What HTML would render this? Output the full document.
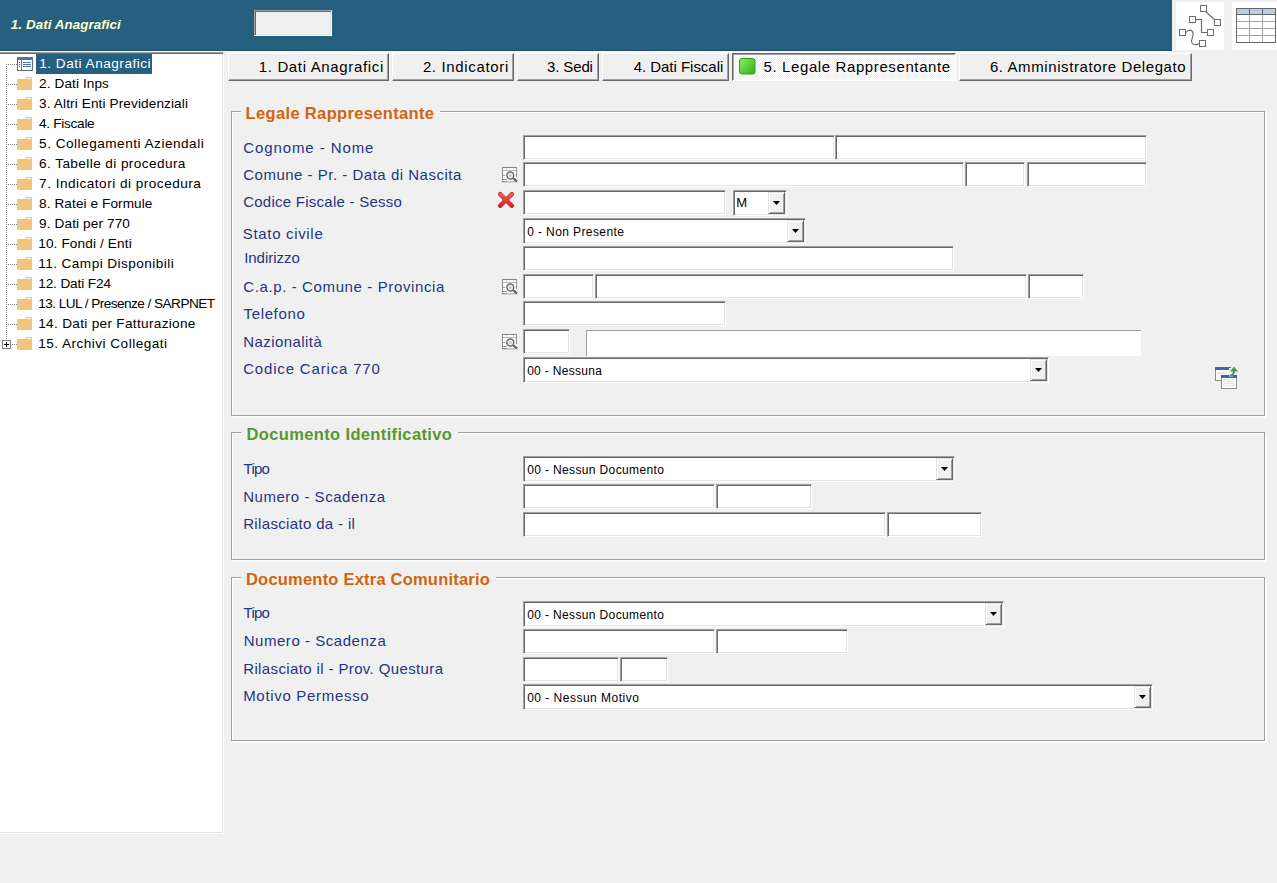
<!DOCTYPE html>
<html lang="it"><head><meta charset="utf-8"><title>Dati Anagrafici</title>
<style>
html,body{margin:0;padding:0}
body{width:1277px;height:883px;overflow:hidden;background:#f0f0f0;position:relative;font-family:'Liberation Sans', 'DejaVu Sans', sans-serif}
.b,.hdr,.sunk,.tab,.tabsel,.fs,.t,svg.i{position:absolute}
.hdr{background:#266080}
.t{white-space:pre;line-height:20px;height:20px}
.sunk{box-sizing:border-box;background:#fff;border:1px solid;border-color:#a0a0a0 #fff #fff #a0a0a0;box-shadow:inset 1px 1px 0 #696969,inset -1px -1px 0 #e3e3e3}
.tree{background:#fff}
.tab{box-sizing:border-box;background:#f0f0f0;border:1px solid;border-color:#fff #696969 #696969 #fff;box-shadow:inset -1px -1px 0 #a0a0a0}
.tabsel{box-sizing:border-box;background:repeating-conic-gradient(#fff 0 25%,#f0f0f0 0 50%) 0 0/2px 2px;border:1px solid;border-color:#696969 #fff #fff #696969;box-shadow:inset 1px 1px 0 #a0a0a0}
.fs{box-sizing:border-box;border:1px solid #a0a0a0;box-shadow:inset 1px 1px 0 #fff,1px 1px 0 #fff,2px 2px 0 #fbfbfb}
.dd{position:absolute;right:1px;top:1px;bottom:1px;width:17px;box-sizing:border-box;background:#f0f0f0;border:1px solid;border-color:#e3e3e3 #696969 #696969 #e3e3e3;box-shadow:inset 1px 1px 0 #fff,inset -1px -1px 0 #a0a0a0}
.dd svg{position:absolute;left:4px;top:8px}
</style></head>
<body>
<div class="hdr" style="left:0px;top:0px;width:1172px;height:51px;"></div>
<div class="b" style="left:0px;top:50px;width:1172px;height:1px;background:#254e69"></div>
<div class="b" style="left:0px;top:51px;width:1172px;height:1px;background:#e4f8ff"></div>
<div class="b" style="left:224px;top:52px;width:948px;height:1px;background:#f5f8fa"></div>
<div class="sunk" style="left:254px;top:10px;width:78px;height:26px;background:#f0f0f0"></div>
<svg class="i" style="left:1172px;top:0" width="105" height="52" viewBox="0 0 105 52"><rect x="4" y="2" width="48" height="48" fill="#fff"/><rect x="60" y="2" width="45" height="48" fill="#fff"/><g fill="none" stroke="#6a6a6a" stroke-width="1.15"><path d="M34 12L43 20"/><path d="M24 19.5H29.5V32.5H35"/><path d="M14 32.5C16 29.5 20 29 21 33C22 37 18 40 20 43C21.5 45 25 45 27 43.5"/></g><rect x="28.5" y="5.5" width="6" height="6" fill="#fff" stroke="#6e6e6e"/><rect x="17.5" y="16.5" width="6" height="6" fill="#fff" stroke="#6e6e6e"/><rect x="42.5" y="19.5" width="6" height="6" fill="#fff" stroke="#6e6e6e"/><rect x="7.5" y="29.5" width="6" height="6" fill="#fff" stroke="#6e6e6e"/><rect x="35.5" y="29.5" width="6" height="6" fill="#fff" stroke="#6e6e6e"/><rect x="27.5" y="40.5" width="6" height="6" fill="#fff" stroke="#6e6e6e"/><rect x="64.5" y="8.5" width="39" height="34" fill="#fff" stroke="none"/><rect x="64.5" y="8.5" width="39" height="6" fill="#b9cde5"/><g stroke="#a6a6a6" stroke-width="1" fill="none"><path d="M64 21.5H104"/><path d="M64 28.5H104"/><path d="M64 35.5H104"/><path d="M77.5 14V43"/><path d="M90.5 14V43"/></g><g stroke="#666" stroke-width="1" fill="none"><path d="M64 14.5H104"/><path d="M77.5 8V14"/><path d="M90.5 8V14"/><rect x="64.5" y="8.5" width="39" height="34"/></g></svg>
<div class="sunk tree" style="left:-2px;top:52px;width:226px;height:782px;"></div>
<div class="b" style="left:36px;top:54px;width:116px;height:20px;background:#266080"></div>
<svg class="i" style="left:0;top:54px" width="36" height="300" viewBox="0 0 36 300"><g stroke="#808080" stroke-width="1" stroke-dasharray="1 1" fill="none"><path d="M6.5 10V286"/><path d="M8 10.5H17"/><path d="M8 30.5H17"/><path d="M8 50.5H17"/><path d="M8 70.5H17"/><path d="M8 90.5H17"/><path d="M8 110.5H17"/><path d="M8 130.5H17"/><path d="M8 150.5H17"/><path d="M8 170.5H17"/><path d="M8 190.5H17"/><path d="M8 210.5H17"/><path d="M8 230.5H17"/><path d="M8 250.5H17"/><path d="M8 270.5H17"/><path d="M12 290.5H17"/></g><rect x="17.5" y="3.5" width="15" height="13" fill="#fff" stroke="#6b6b78"/><rect x="17" y="3" width="16" height="3" fill="#4a72b4"/><path d="M21.5 6V16" stroke="#6b6b78" fill="none"/><rect x="19" y="8" width="1" height="1" fill="#555"/><rect x="23" y="8" width="8" height="1" fill="#4a72b4"/><rect x="19" y="10" width="1" height="1" fill="#555"/><rect x="23" y="10" width="8" height="1" fill="#4a72b4"/><rect x="19" y="12" width="1" height="1" fill="#555"/><rect x="23" y="12" width="8" height="1" fill="#4a72b4"/><path d="M17 25H25L26.5 23H32V36H17z" fill="#f0c57f"/><rect x="27" y="24" width="4" height="1" fill="#fff8e8"/><path d="M17 45H25L26.5 43H32V56H17z" fill="#f0c57f"/><rect x="27" y="44" width="4" height="1" fill="#fff8e8"/><path d="M17 65H25L26.5 63H32V76H17z" fill="#f0c57f"/><rect x="27" y="64" width="4" height="1" fill="#fff8e8"/><path d="M17 85H25L26.5 83H32V96H17z" fill="#f0c57f"/><rect x="27" y="84" width="4" height="1" fill="#fff8e8"/><path d="M17 105H25L26.5 103H32V116H17z" fill="#f0c57f"/><rect x="27" y="104" width="4" height="1" fill="#fff8e8"/><path d="M17 125H25L26.5 123H32V136H17z" fill="#f0c57f"/><rect x="27" y="124" width="4" height="1" fill="#fff8e8"/><path d="M17 145H25L26.5 143H32V156H17z" fill="#f0c57f"/><rect x="27" y="144" width="4" height="1" fill="#fff8e8"/><path d="M17 165H25L26.5 163H32V176H17z" fill="#f0c57f"/><rect x="27" y="164" width="4" height="1" fill="#fff8e8"/><path d="M17 185H25L26.5 183H32V196H17z" fill="#f0c57f"/><rect x="27" y="184" width="4" height="1" fill="#fff8e8"/><path d="M17 205H25L26.5 203H32V216H17z" fill="#f0c57f"/><rect x="27" y="204" width="4" height="1" fill="#fff8e8"/><path d="M17 225H25L26.5 223H32V236H17z" fill="#f0c57f"/><rect x="27" y="224" width="4" height="1" fill="#fff8e8"/><path d="M17 245H25L26.5 243H32V256H17z" fill="#f0c57f"/><rect x="27" y="244" width="4" height="1" fill="#fff8e8"/><path d="M17 265H25L26.5 263H32V276H17z" fill="#f0c57f"/><rect x="27" y="264" width="4" height="1" fill="#fff8e8"/><path d="M17 285H25L26.5 283H32V296H17z" fill="#f0c57f"/><rect x="27" y="284" width="4" height="1" fill="#fff8e8"/><rect x="2.5" y="286.5" width="8" height="8" fill="#fff" stroke="#808080"/><path d="M4 290.5H9M6.5 288V293" stroke="#000" fill="none"/></svg>
<div class="tab" style="left:228px;top:53px;width:161px;height:28px;"></div>
<div class="tab" style="left:392px;top:53px;width:122px;height:28px;"></div>
<div class="tab" style="left:517px;top:53px;width:82px;height:28px;"></div>
<div class="tab" style="left:602px;top:53px;width:127px;height:28px;"></div>
<div class="tabsel" style="left:732px;top:53px;width:224px;height:28px;"></div>
<div class="tab" style="left:959px;top:53px;width:233px;height:28px;"></div>
<div class="fs" style="left:231px;top:111px;width:1034px;height:305px;"></div><div class="b" style="left:241px;top:110px;width:199px;height:4px;background:#f0f0f0"></div>
<div class="fs" style="left:231px;top:432px;width:1034px;height:128px;"></div><div class="b" style="left:241px;top:431px;width:217px;height:4px;background:#f0f0f0"></div>
<div class="fs" style="left:231px;top:577px;width:1034px;height:164px;"></div><div class="b" style="left:241px;top:576px;width:255px;height:4px;background:#f0f0f0"></div>
<div class="b" style="left:586px;top:330px;width:555px;height:26px;background:#fff;border-top:1px solid #a0a0a0;border-left:1px solid #a0a0a0;box-sizing:border-box"></div>
<div class="sunk" style="left:523px;top:135px;width:312px;height:25px;"></div>
<div class="sunk" style="left:835px;top:135px;width:312px;height:25px;"></div>
<div class="sunk" style="left:523px;top:162px;width:441px;height:25px;"></div>
<div class="sunk" style="left:965px;top:162px;width:60px;height:25px;"></div>
<div class="sunk" style="left:1027px;top:162px;width:120px;height:25px;"></div>
<div class="sunk" style="left:523px;top:190px;width:203px;height:25px;"></div>
<div class="sunk" style="left:523px;top:246px;width:431px;height:25px;"></div>
<div class="sunk" style="left:523px;top:274px;width:71px;height:25px;"></div>
<div class="sunk" style="left:595px;top:274px;width:432px;height:25px;"></div>
<div class="sunk" style="left:1028px;top:274px;width:56px;height:25px;"></div>
<div class="sunk" style="left:523px;top:301px;width:203px;height:25px;"></div>
<div class="sunk" style="left:523px;top:329px;width:47px;height:25px;"></div>
<div class="sunk" style="left:523px;top:484px;width:192px;height:25px;"></div>
<div class="sunk" style="left:716px;top:484px;width:96px;height:25px;"></div>
<div class="sunk" style="left:523px;top:512px;width:363px;height:25px;"></div>
<div class="sunk" style="left:887px;top:512px;width:95px;height:25px;"></div>
<div class="sunk" style="left:523px;top:629px;width:192px;height:25px;"></div>
<div class="sunk" style="left:716px;top:629px;width:132px;height:25px;"></div>
<div class="sunk" style="left:523px;top:657px;width:96px;height:25px;"></div>
<div class="sunk" style="left:620px;top:657px;width:48px;height:25px;"></div>
<div class="sunk" style="left:733px;top:190px;width:54px;height:26px;"><div class="dd"><svg width="7" height="4" viewBox="0 0 7 4"><path d="M0 0h7L3.5 4z" fill="#000"/></svg></div></div>
<div class="sunk" style="left:523px;top:218px;width:283px;height:26px;"><div class="dd"><svg width="7" height="4" viewBox="0 0 7 4"><path d="M0 0h7L3.5 4z" fill="#000"/></svg></div></div>
<div class="sunk" style="left:523px;top:357px;width:526px;height:26px;"><div class="dd"><svg width="7" height="4" viewBox="0 0 7 4"><path d="M0 0h7L3.5 4z" fill="#000"/></svg></div></div>
<div class="sunk" style="left:523px;top:456px;width:432px;height:26px;"><div class="dd"><svg width="7" height="4" viewBox="0 0 7 4"><path d="M0 0h7L3.5 4z" fill="#000"/></svg></div></div>
<div class="sunk" style="left:523px;top:601px;width:481px;height:26px;"><div class="dd"><svg width="7" height="4" viewBox="0 0 7 4"><path d="M0 0h7L3.5 4z" fill="#000"/></svg></div></div>
<div class="sunk" style="left:523px;top:684px;width:630px;height:26px;"><div class="dd"><svg width="7" height="4" viewBox="0 0 7 4"><path d="M0 0h7L3.5 4z" fill="#000"/></svg></div></div>
<svg class="i" style="left:502px;top:167px" width="17" height="17" viewBox="0 0 17 17"><rect x="0" y="0" width="15" height="15" fill="#fff"/><path d="M0 0.5H15" stroke="#858585" fill="none"/><path d="M0.5 0V15M14.5 0V10" stroke="#8e8e8e" fill="none"/><path d="M1 3.5H14" stroke="#b4b4b4" fill="none"/><path d="M4.5 1V4M11.5 1V4" stroke="#d0d0d0" fill="none"/><path d="M1 8.5H3" stroke="#a0a0a0" fill="none"/><path d="M0 12.5H5M0 14.5H5" stroke="#8e8e8e" fill="none"/><path d="M5 14.5H15" stroke="#c0c0c0" fill="none"/><path d="M0 15.5H16" stroke="#d4d4d4" fill="none"/><circle cx="8.3" cy="8.5" r="3.45" fill="#f2f5f8" stroke="#6c6c6c" stroke-width="1.5"/><rect x="7.2" y="7.4" width="2.3" height="2.3" fill="#b4bcc4"/><path d="M11.2 11.3L15 14.3" stroke="#626262" stroke-width="2.3" stroke-linecap="butt" fill="none"/></svg><svg class="i" style="left:502px;top:279px" width="17" height="17" viewBox="0 0 17 17"><rect x="0" y="0" width="15" height="15" fill="#fff"/><path d="M0 0.5H15" stroke="#858585" fill="none"/><path d="M0.5 0V15M14.5 0V10" stroke="#8e8e8e" fill="none"/><path d="M1 3.5H14" stroke="#b4b4b4" fill="none"/><path d="M4.5 1V4M11.5 1V4" stroke="#d0d0d0" fill="none"/><path d="M1 8.5H3" stroke="#a0a0a0" fill="none"/><path d="M0 12.5H5M0 14.5H5" stroke="#8e8e8e" fill="none"/><path d="M5 14.5H15" stroke="#c0c0c0" fill="none"/><path d="M0 15.5H16" stroke="#d4d4d4" fill="none"/><circle cx="8.3" cy="8.5" r="3.45" fill="#f2f5f8" stroke="#6c6c6c" stroke-width="1.5"/><rect x="7.2" y="7.4" width="2.3" height="2.3" fill="#b4bcc4"/><path d="M11.2 11.3L15 14.3" stroke="#626262" stroke-width="2.3" stroke-linecap="butt" fill="none"/></svg><svg class="i" style="left:502px;top:334px" width="17" height="17" viewBox="0 0 17 17"><rect x="0" y="0" width="15" height="15" fill="#fff"/><path d="M0 0.5H15" stroke="#858585" fill="none"/><path d="M0.5 0V15M14.5 0V10" stroke="#8e8e8e" fill="none"/><path d="M1 3.5H14" stroke="#b4b4b4" fill="none"/><path d="M4.5 1V4M11.5 1V4" stroke="#d0d0d0" fill="none"/><path d="M1 8.5H3" stroke="#a0a0a0" fill="none"/><path d="M0 12.5H5M0 14.5H5" stroke="#8e8e8e" fill="none"/><path d="M5 14.5H15" stroke="#c0c0c0" fill="none"/><path d="M0 15.5H16" stroke="#d4d4d4" fill="none"/><circle cx="8.3" cy="8.5" r="3.45" fill="#f2f5f8" stroke="#6c6c6c" stroke-width="1.5"/><rect x="7.2" y="7.4" width="2.3" height="2.3" fill="#b4bcc4"/><path d="M11.2 11.3L15 14.3" stroke="#626262" stroke-width="2.3" stroke-linecap="butt" fill="none"/></svg><svg class="i" style="left:497px;top:191px" width="18" height="18" viewBox="0 0 18 18"><defs><linearGradient id="rx" x1="0" y1="0" x2="0" y2="1"><stop offset="0" stop-color="#f4604c"/><stop offset="1" stop-color="#d8252a"/></linearGradient></defs><path d="M3.2 3.2L14.8 14.8M14.8 3.2L3.2 14.8" stroke="#b81c20" stroke-width="4.4" stroke-linecap="round" fill="none"/><path d="M3.2 3.2L14.8 14.8M14.8 3.2L3.2 14.8" stroke="url(#rx)" stroke-width="3.2" stroke-linecap="round" fill="none"/></svg><svg class="i" style="left:739px;top:58px" width="17" height="17" viewBox="0 0 17 17"><defs><linearGradient id="gq" x1="0" y1="0" x2="1" y2="1"><stop offset="0" stop-color="#8cf060"/><stop offset="0.5" stop-color="#5cd03a"/><stop offset="1" stop-color="#3aa822"/></linearGradient></defs><rect x="0.5" y="0.5" width="15.5" height="15.5" rx="2.5" fill="url(#gq)" stroke="#2e9a1a"/></svg><svg class="i" style="left:1214px;top:365px" width="26" height="26" viewBox="0 0 26 26"><rect x="1.5" y="2.5" width="15" height="13" fill="#fff" stroke="#8c8c8c"/><rect x="1" y="2" width="16" height="3" fill="#3768b2"/><rect x="3.5" y="7.5" width="9" height="1.5" fill="none" stroke="#e8dcd0" stroke-width="0.8"/><rect x="7.5" y="10.5" width="15" height="13" fill="#fff" stroke="#8c8c8c"/><rect x="7" y="10" width="16" height="3" fill="#3768b2"/><rect x="10" y="14.5" width="10" height="2" fill="none" stroke="#e4dccf" stroke-width="0.8"/><rect x="10" y="18.5" width="10" height="2" fill="none" stroke="#dcdcdc" stroke-width="0.8"/><rect x="15" y="3" width="9" height="9" fill="#f0f0f0"/><path d="M15.5 10.8C18.5 10.8 20 9.2 20 5.5" stroke="#4f9465" stroke-width="2.2" fill="none"/><path d="M16 6.6L20 1.6L24 6.6z" fill="#4f9465"/><path d="M19.5 10H23V13H17.5z" fill="#3768b2"/></svg>
<span class="t" style="left:10.85px;top:15.38px;font-size:13.33px;letter-spacing:0.089px;font-weight:bold;font-style:italic;color:#ffffcc;">1. Dati Anagrafici</span>
<span class="t" style="left:39.20px;top:54.29px;font-size:13.6px;letter-spacing:0.508px;color:#fff;">1. Dati Anagrafici</span>
<span class="t" style="left:39.10px;top:74.29px;font-size:13.6px;letter-spacing:0.094px;">2. Dati Inps</span>
<span class="t" style="left:39.10px;top:94.29px;font-size:13.6px;letter-spacing:0.117px;">3. Altri Enti Previdenziali</span>
<span class="t" style="left:39.10px;top:114.29px;font-size:13.6px;letter-spacing:-0.288px;">4. Fiscale</span>
<span class="t" style="left:39.10px;top:134.29px;font-size:13.6px;letter-spacing:0.499px;">5. Collegamenti Aziendali</span>
<span class="t" style="left:39.10px;top:154.29px;font-size:13.6px;letter-spacing:0.409px;">6. Tabelle di procedura</span>
<span class="t" style="left:39.10px;top:174.29px;font-size:13.6px;letter-spacing:0.485px;">7. Indicatori di procedura</span>
<span class="t" style="left:39.10px;top:194.29px;font-size:13.6px;letter-spacing:0.087px;">8. Ratei e Formule</span>
<span class="t" style="left:39.10px;top:214.29px;font-size:13.6px;letter-spacing:0.116px;">9. Dati per 770</span>
<span class="t" style="left:38.20px;top:234.29px;font-size:13.6px;letter-spacing:0.136px;">10. Fondi / Enti</span>
<span class="t" style="left:38.20px;top:254.29px;font-size:13.6px;letter-spacing:0.440px;">11. Campi Disponibili</span>
<span class="t" style="left:38.20px;top:274.29px;font-size:13.6px;letter-spacing:-0.118px;">12. Dati F24</span>
<span class="t" style="left:38.20px;top:294.29px;font-size:13.6px;letter-spacing:-0.539px;">13. LUL / Presenze / SARPNET</span>
<span class="t" style="left:38.20px;top:314.29px;font-size:13.6px;letter-spacing:0.318px;">14. Dati per Fatturazione</span>
<span class="t" style="left:38.20px;top:334.29px;font-size:13.6px;letter-spacing:0.471px;">15. Archivi Collegati</span>
<span class="t" style="left:258.76px;top:56.80px;font-size:15px;letter-spacing:0.651px;">1. Dati Anagrafici</span>
<span class="t" style="left:422.88px;top:56.80px;font-size:15px;letter-spacing:0.651px;">2. Indicatori</span>
<span class="t" style="left:547.10px;top:56.80px;font-size:15px;letter-spacing:-0.141px;">3. Sedi</span>
<span class="t" style="left:633.66px;top:56.80px;font-size:15px;letter-spacing:-0.028px;">4. Dati Fiscali</span>
<span class="t" style="left:763.54px;top:56.80px;font-size:15px;letter-spacing:0.609px;">5. Legale Rappresentante</span>
<span class="t" style="left:989.88px;top:56.80px;font-size:15px;letter-spacing:0.595px;">6. Amministratore Delegato</span>
<span class="t" style="left:245.62px;top:102.88px;font-size:16.5px;letter-spacing:0.341px;font-weight:bold;color:#d3640f;">Legale Rappresentante</span>
<span class="t" style="left:246.57px;top:423.88px;font-size:16.5px;letter-spacing:0.355px;font-weight:bold;color:#56982f;">Documento Identificativo</span>
<span class="t" style="left:245.99px;top:569.28px;font-size:16.5px;letter-spacing:0.212px;font-weight:bold;color:#d3640f;">Documento Extra Comunitario</span>
<span class="t" style="left:243.20px;top:137.70px;font-size:15px;letter-spacing:0.908px;color:#27357f;">Cognome - Nome</span>
<span class="t" style="left:243.20px;top:164.90px;font-size:15px;letter-spacing:0.508px;color:#27357f;">Comune - Pr. - Data di Nascita</span>
<span class="t" style="left:243.20px;top:192.20px;font-size:15px;letter-spacing:0.252px;color:#27357f;">Codice Fiscale - Sesso</span>
<span class="t" style="left:242.76px;top:223.60px;font-size:15px;letter-spacing:0.676px;color:#27357f;">Stato civile</span>
<span class="t" style="left:244.14px;top:247.80px;font-size:15px;letter-spacing:-0.012px;color:#27357f;">Indirizzo</span>
<span class="t" style="left:243.20px;top:276.50px;font-size:15px;letter-spacing:0.620px;color:#27357f;">C.a.p. - Comune - Provincia</span>
<span class="t" style="left:243.54px;top:303.80px;font-size:15px;letter-spacing:0.640px;color:#27357f;">Telefono</span>
<span class="t" style="left:243.20px;top:331.60px;font-size:15px;letter-spacing:0.442px;color:#27357f;">Nazionalità</span>
<span class="t" style="left:243.20px;top:359.40px;font-size:15px;letter-spacing:0.831px;color:#27357f;">Codice Carica 770</span>
<span class="t" style="left:243.54px;top:458.80px;font-size:15px;letter-spacing:-0.755px;color:#27357f;">Tipo</span>
<span class="t" style="left:243.20px;top:486.60px;font-size:15px;letter-spacing:0.528px;color:#27357f;">Numero - Scadenza</span>
<span class="t" style="left:243.20px;top:514.40px;font-size:15px;letter-spacing:0.346px;color:#27357f;">Rilasciato da - il</span>
<span class="t" style="left:243.54px;top:603.20px;font-size:15px;letter-spacing:-0.755px;color:#27357f;">Tipo</span>
<span class="t" style="left:243.70px;top:631.30px;font-size:15px;letter-spacing:0.542px;color:#27357f;">Numero - Scadenza</span>
<span class="t" style="left:243.20px;top:659.40px;font-size:15px;letter-spacing:0.376px;color:#27357f;">Rilasciato il - Prov. Questura</span>
<span class="t" style="left:243.20px;top:686.30px;font-size:15px;letter-spacing:0.690px;color:#27357f;">Motivo Permesso</span>
<span class="t" style="left:736.20px;top:193.30px;font-size:13px;letter-spacing:0.000px;">M</span>
<span class="t" style="left:527.14px;top:221.54px;font-size:12px;letter-spacing:0.403px;">0 - Non Presente</span>
<span class="t" style="left:527.14px;top:360.84px;font-size:12px;letter-spacing:0.308px;">00 - Nessuna</span>
<span class="t" style="left:527.14px;top:459.84px;font-size:12px;letter-spacing:0.368px;">00 - Nessun Documento</span>
<span class="t" style="left:527.14px;top:604.84px;font-size:12px;letter-spacing:0.368px;">00 - Nessun Documento</span>
<span class="t" style="left:527.14px;top:687.84px;font-size:12px;letter-spacing:0.492px;">00 - Nessun Motivo</span>
</body></html>
